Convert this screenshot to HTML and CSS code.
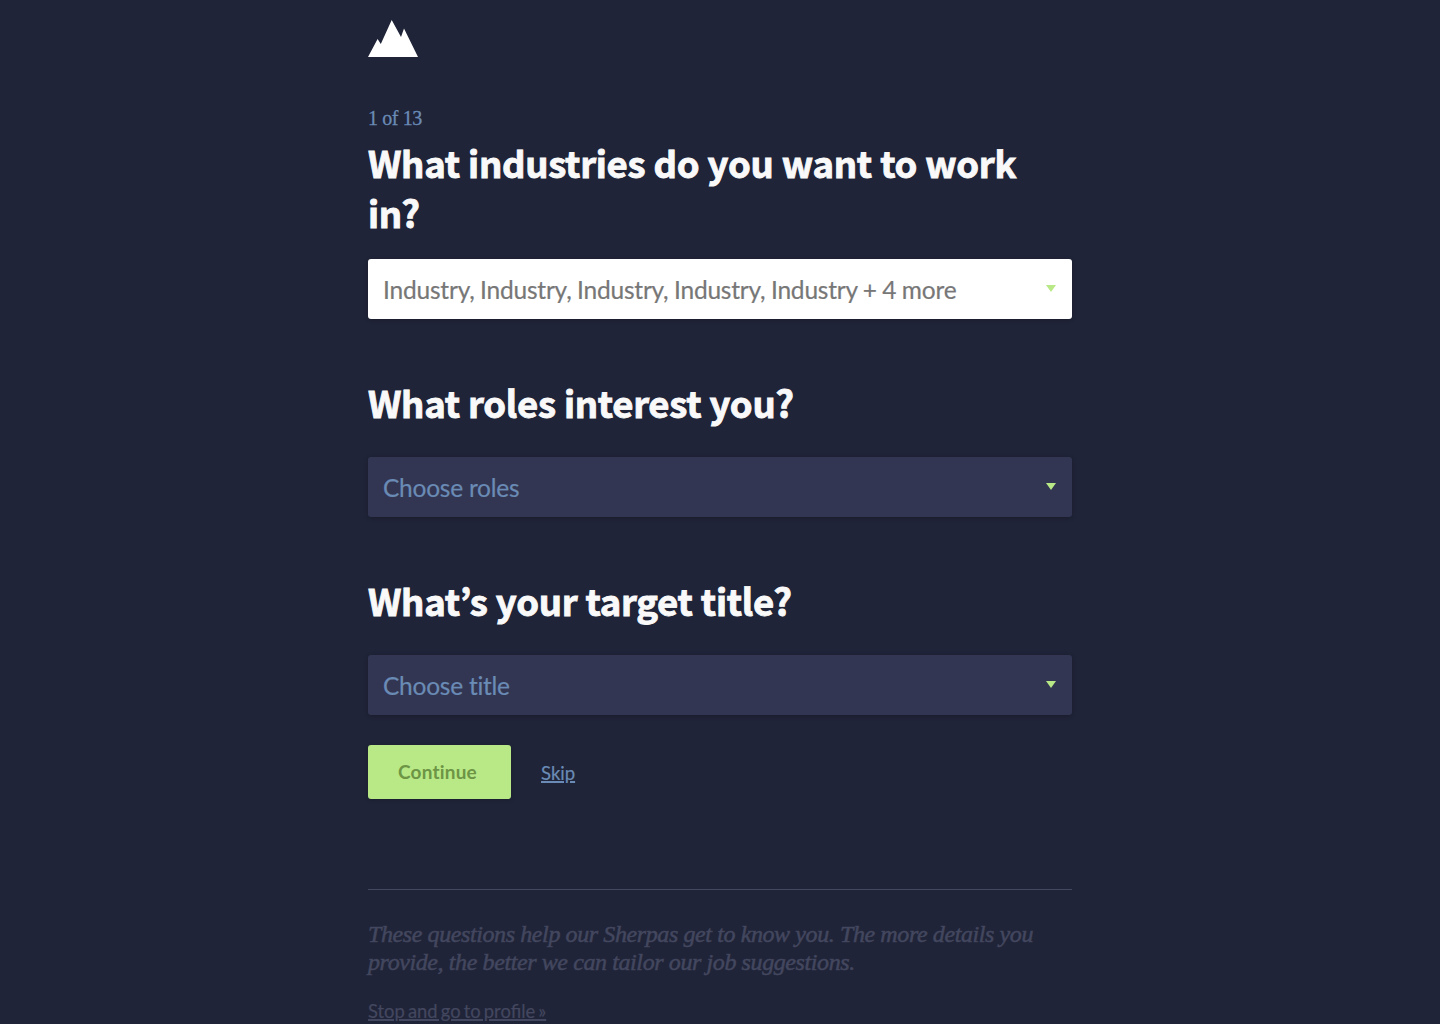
FILE: index.html
```html
<!DOCTYPE html>
<html lang="en">
<head>
<meta charset="utf-8">
<title>Job preferences</title>
<link rel="stylesheet" href="styles.css">
</head>
<body>
<main class="page">
  <svg class="logo" width="50" height="37" viewBox="0 0 50 37" fill="#fff" aria-label="Home"><path d="M0 37L9.6 19L12.8 24L23.7 0L33 17L36 8.5L50 37Z"/></svg>
  <p class="step">1 of 13</p>
  <form class="form">
    <section class="question first">
      <h1 class="title">What industries do you want to work in?</h1>
      <div class="select filled"><span>Industry, Industry, Industry, Industry, Industry + 4 more</span><i class="arrow"></i></div>
    </section>
    <section class="question">
      <h2 class="title">What roles interest you?</h2>
      <div class="select"><span>Choose roles</span><i class="arrow"></i></div>
    </section>
    <section class="question">
      <h2 class="title">What’s your target title?</h2>
      <div class="select"><span>Choose title</span><i class="arrow"></i></div>
    </section>
    <div class="actions">
      <button class="continue" type="button">Continue</button>
      <a class="skip" href="#">Skip</a>
    </div>
  </form>
  <footer class="footer">
    <p class="note">These questions help our Sherpas get to know you. The more details you provide, the better we can tailor our job suggestions.</p>
    <a class="stop" href="#">Stop and go to profile »</a>
  </footer>
</main>
</body>
</html>
```
FILE: styles.css
```css
* { box-sizing: border-box; }
html, body { height: 100%; }
body {
  margin: 0;
  overflow: hidden;
  background: #202438;
  font-family: Lato, sans-serif;
}
h1, h2, p { margin: 0; }
.page { width: 704px; margin: 0 auto; padding-top: 20px; }
.logo { display: block; }
.step {
  margin-top: 49px;
  height: 32px;
  font: 20px/24px "Liberation Serif", serif;
  letter-spacing: -.4px;
  -webkit-text-stroke: .3px;
  color: #6a8bb5;
}
.title {
  font: 700 36.5px/50px "Noto Sans CJK KR", sans-serif;
  letter-spacing: -.3px;
  word-spacing: .3px;
  -webkit-text-stroke: .9px;
  color: #f9f9f9;
}
.question { padding-top: 59px; }
.question.first { padding-top: 0; }
.select {
  display: flex;
  align-items: center;
  justify-content: space-between;
  height: 60px;
  margin-top: 29px;
  padding: 2px 16px 0 15px;
  border-radius: 3px;
  background: #333652;
  box-shadow: 0 1px 4px rgba(0, 0, 0, .25);
  color: #6a8bb5;
  font-size: 24.5px;
  line-height: 30px;
  letter-spacing: -.25px;
  -webkit-text-stroke: .2px;
}
.first .select { margin-top: 21px; }
.filled { background: #fff; color: #777; letter-spacing: -.2px; word-spacing: -.6px; }
.arrow {
  margin-top: -4px;
  border: 5px solid transparent;
  border-top: 7px solid #b8e986;
  border-bottom: 0;
}
.actions { display: flex; gap: 30px; margin-top: 30px; height: 54px; }
.continue {
  width: 143px;
  padding: 0 4px 0 0;
  border: 0;
  border-radius: 3px;
  background: #b8e986;
  box-shadow: 0 1px 4px rgba(0, 0, 0, .2);
  color: #6d9545;
  font: 700 19px/54px Lato, sans-serif;
  letter-spacing: .2px;
}
.skip {
  color: #6a8bb5;
  font-size: 18.5px;
  line-height: 56px;
  text-decoration-thickness: 2px;
  -webkit-text-stroke: .2px;
}
.footer { margin-top: 90px; padding-top: 30px; border-top: 1px solid #43475f; }
.note {
  font: italic 24px/28px "Liberation Serif", serif;
  letter-spacing: -.4px;
  -webkit-text-stroke: .5px;
  color: #43475f;
}
.stop {
  display: inline-block;
  margin-top: 23px;
  color: #43475f;
  font-size: 18.4px;
  line-height: 24px;
  word-spacing: -1.6px;
  text-decoration-thickness: 2px;
  -webkit-text-stroke: .2px;
}
```
